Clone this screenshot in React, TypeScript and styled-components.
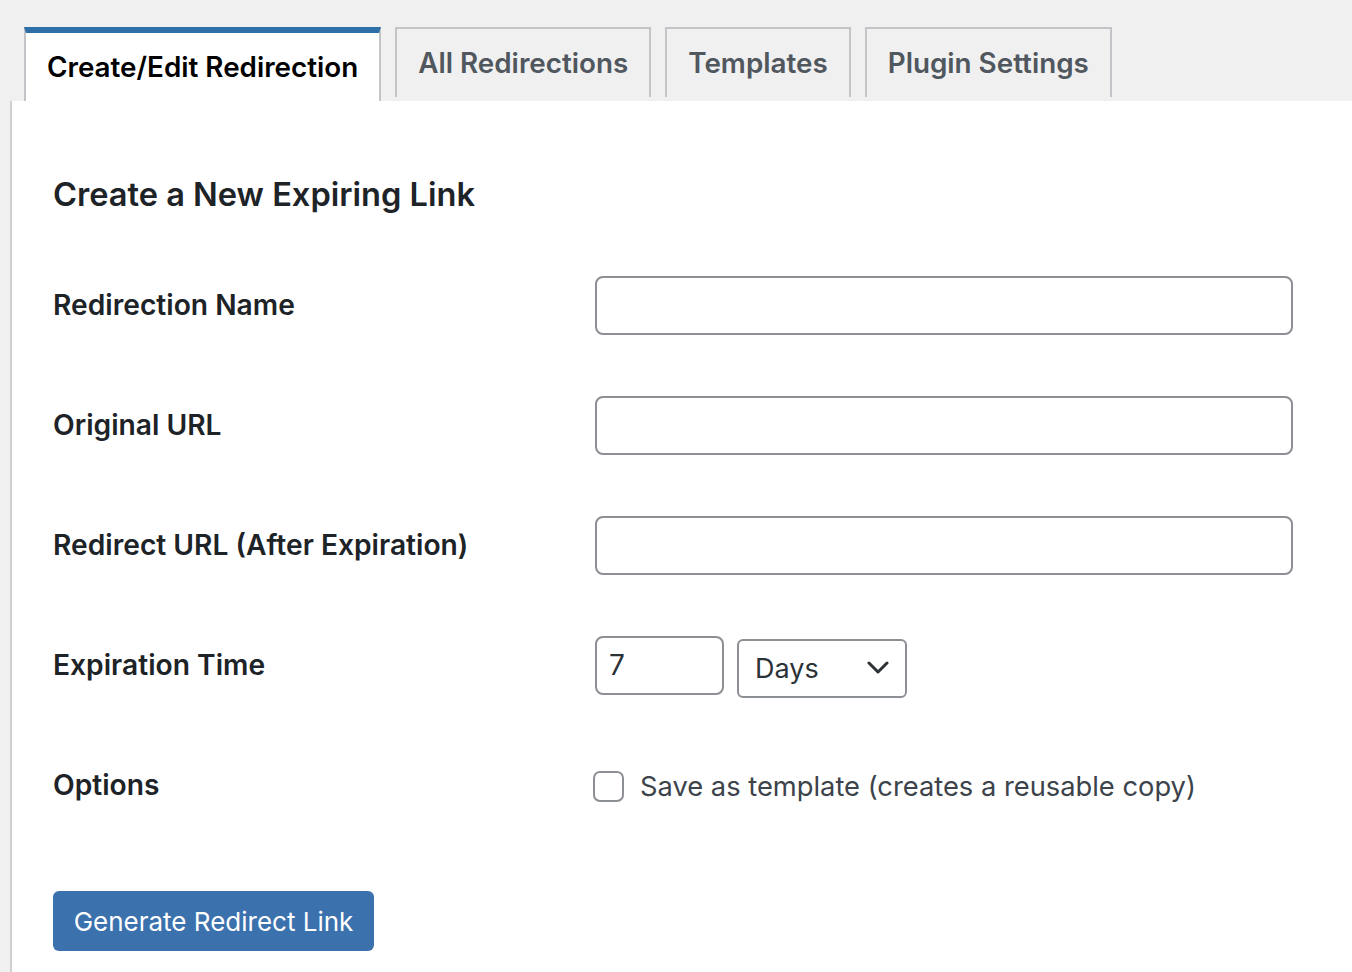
import React from "react";
import styled, { createGlobalStyle } from "styled-components";

const GlobalStyle = createGlobalStyle`
  html, body {
    margin: 0;
    padding: 0;
    background: #f0f0f1;
    font-family: Inter, "Noto Sans", "Liberation Sans", sans-serif;
    color: #1d2327;
  }
  * { box-sizing: border-box; }
`;

const Page = styled.div`
  display: flex;
  flex-direction: column;
  min-height: 972px;
  padding-top: 27px;
`;

const TabBar = styled.nav`
  display: flex;
  align-items: flex-start;
  gap: 14px;
  padding-left: 24px;
  height: 74px;
`;

const Tab = styled.a<{ $active?: boolean }>`
  display: flex;
  align-items: center;
  height: ${(p) => (p.$active ? "74px" : "70px")};
  padding: 0 21px;
  border: 2px solid #c3c4c7;
  border-bottom: none;
  border-top: ${(p) => (p.$active ? "6px solid #2f6fa7" : "2px solid #c3c4c7")};
  background: ${(p) => (p.$active ? "#ffffff" : "#f0f0f1")};
  color: ${(p) => (p.$active ? "#000000" : "#50575e")};
  font-size: 27.8px;
  font-weight: 600;
  text-decoration: none;
  white-space: nowrap;
  cursor: pointer;
`;

const Panel = styled.section`
  flex: 1;
  margin-left: 10px;
  background: #ffffff;
  border-left: 2px solid #d0d1d4;
  padding: 73px 0 40px 41px;
`;

const Heading = styled.h2`
  margin: 0 0 31px;
  font-size: 32.6px;
  line-height: 40px;
  font-weight: 600;
  color: #1d2327;
`;

const FormRow = styled.div`
  display: grid;
  grid-template-columns: 542px 698px;
  align-items: center;
  height: 120px;
`;

const Label = styled.label`
  font-size: 28.2px;
  font-weight: 600;
  color: #1d2327;
`;

const TextInput = styled.input`
  width: 698px;
  height: 59px;
  border: 2px solid #8c8f94;
  border-radius: 8px;
  background: #fff;
  padding: 0 14px;
  font-family: inherit;
  font-size: 28px;
  color: #2c3338;
  outline: none;
`;

const Inline = styled.div`
  display: flex;
  align-items: center;
  gap: 13px;
`;

const NumberInput = styled(TextInput)`
  width: 129px;
  padding: 0 12px;
`;

const SelectBox = styled.div`
  display: flex;
  align-items: center;
  justify-content: space-between;
  width: 170px;
  height: 59px;
  margin-top: 6px;
  padding: 0 16px 0 16px;
  border: 2px solid #8c8f94;
  border-radius: 6px;
  background: #fff;
  font-size: 27px;
  color: #2c3338;
`;

const CheckRow = styled.label`
  display: flex;
  align-items: center;
  gap: 16px;
  margin-left: -2px;
  margin-top: 2px;
  font-size: 27.3px;
  font-weight: 400;
  color: #3c434a;
`;

const CheckBox = styled.span`
  width: 31px;
  height: 31px;
  border: 2px solid #8c8f94;
  border-radius: 7px;
  background: #fff;
`;

const SubmitRow = styled.div`
  padding-top: 46px;
`;

const PrimaryButton = styled.button`
  width: 321px;
  height: 60px;
  border: none;
  border-radius: 6px;
  background: #3b71ad;
  color: #ffffff;
  font-family: inherit;
  font-size: 26px;
  font-weight: 400;
  cursor: pointer;
`;

const Chevron = () => (
  <svg width="22" height="14" viewBox="0 0 22 14" fill="none">
    <polyline
      points="2,2 11,11 20,2"
      stroke="#2c3338"
      strokeWidth="3"
      strokeLinecap="round"
      strokeLinejoin="round"
    />
  </svg>
);

export default function App() {
  return (
    <>
      <GlobalStyle />
      <Page>
        <TabBar>
          <Tab $active>Create/Edit Redirection</Tab>
          <Tab>All Redirections</Tab>
          <Tab>Templates</Tab>
          <Tab>Plugin Settings</Tab>
        </TabBar>
        <Panel>
          <Heading>Create a New Expiring Link</Heading>
          <FormRow>
            <Label>Redirection Name</Label>
            <TextInput type="text" />
          </FormRow>
          <FormRow>
            <Label>Original URL</Label>
            <TextInput type="text" />
          </FormRow>
          <FormRow>
            <Label>Redirect URL (After Expiration)</Label>
            <TextInput type="text" />
          </FormRow>
          <FormRow>
            <Label>Expiration Time</Label>
            <Inline>
              <NumberInput type="text" defaultValue="7" />
              <SelectBox>
                <span>Days</span>
                <Chevron />
              </SelectBox>
            </Inline>
          </FormRow>
          <FormRow>
            <Label>Options</Label>
            <CheckRow>
              <CheckBox />
              Save as template (creates a reusable copy)
            </CheckRow>
          </FormRow>
          <SubmitRow>
            <PrimaryButton>Generate Redirect Link</PrimaryButton>
          </SubmitRow>
        </Panel>
      </Page>
    </>
  );
}
